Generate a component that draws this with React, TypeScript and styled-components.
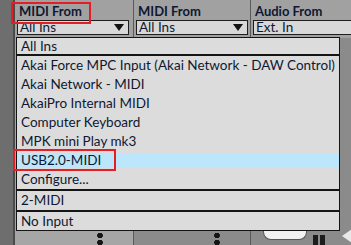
import React from 'react'
import styled, { createGlobalStyle } from 'styled-components'

const GlobalStyle = createGlobalStyle`
  html, body { margin: 0; padding: 0; background: #9b9b9b; }
  body { font-family: Lato, "Liberation Sans", sans-serif; }
`

type Item = { label: string; selected?: boolean; marked?: boolean }

const inputs: Item[][] = [
  [{ label: 'All Ins' }],
  [
    { label: 'Akai Force MPC Input (Akai Network - DAW Control)' },
    { label: 'Akai Network - MIDI' },
    { label: 'AkaiPro Internal MIDI' },
    { label: 'Computer Keyboard' },
    { label: 'MPK mini Play mk3' },
    { label: 'USB2.0-MIDI', selected: true, marked: true },
    { label: 'Configure...' },
  ],
  [{ label: '2-MIDI' }],
  [{ label: 'No Input' }],
]

export default function App() {
  return (
    <>
      <GlobalStyle />
      <Frame>
        <LeftStrip />
        <Track width={118}>
          <Header>
            <HeaderLabel marked>MIDI From</HeaderLabel>
          </Header>
          <Chooser>
            <span>All Ins</span>
            <Arrow />
          </Chooser>
          <TrackBody tone="#a6a6a6">
            <Dots />
          </TrackBody>
        </Track>
        <Track width={116}>
          <Header>
            <HeaderLabel>MIDI From</HeaderLabel>
          </Header>
          <Chooser>
            <span>All Ins</span>
            <Arrow />
          </Chooser>
          <TrackBody tone="#8b8b8b">
            <Dots />
          </TrackBody>
        </Track>
        <Track width={104}>
          <Header>
            <HeaderLabel>Audio From</HeaderLabel>
          </Header>
          <Chooser wide>
            <span>Ext. In</span>
          </Chooser>
          <TrackBody tone="#8b8b8b">
            <Pill />
            <Meter />
            <Triangle />
          </TrackBody>
        </Track>

        <Menu>
          {inputs.map((group, gi) => (
            <MenuGroup key={gi}>
              {group.map((item) => (
                <MenuItem key={item.label}>
                  <ItemLabel selected={item.selected} marked={item.marked}>
                    {item.label}
                  </ItemLabel>
                </MenuItem>
              ))}
            </MenuGroup>
          ))}
        </Menu>
      </Frame>
    </>
  )
}

const Frame = styled.div`
  position: relative;
  width: 351px;
  height: 245px;
  overflow: hidden;
  display: flex;
  background: #9b9b9b;
  color: #0f1832;
`

const LeftStrip = styled.div`
  width: 13px;
  flex: none;
  background: #6e6e6e;
  border-right: 2px solid #4a4a4a;
`

const Track = styled.div<{ width: number }>`
  width: ${(p) => p.width}px;
  flex: none;
  display: flex;
  flex-direction: column;
  border-right: 1px solid #5a5a5a;
  background: #a1a1a1;
`

const Header = styled.div`
  height: 20px;
  display: flex;
  align-items: center;
  padding-left: 4px;
`

const HeaderLabel = styled.div<{ marked?: boolean }>`
  position: relative;
  z-index: 2;
  font-size: 13px;
  font-weight: 700;
  line-height: 16px;
  padding-top: 2px;

  &::after {
    content: '';
    display: ${(p) => (p.marked ? 'block' : 'none')};
    position: absolute;
    left: -8px;
    right: -9px;
    top: 1px;
    bottom: -5px;
    border: 2px solid #e41e26;
  }
`

const Chooser = styled.div<{ wide?: boolean }>`
  height: 15px;
  width: ${(p) => (p.wide ? 'auto' : '112px')};
  margin: 0 ${(p) => (p.wide ? '-4px' : '0')} 0 2px;
  box-sizing: border-box;
  border: 1px solid #1e1e1e;
  background: #d8d8d8;
  display: flex;
  align-items: center;
  justify-content: space-between;
  padding: 0 4px 0 2px;
  font-size: 13.5px;
  line-height: 13px;
  position: relative;
  z-index: 1;
`

const Arrow = styled.div`
  width: 0;
  height: 0;
  border-left: 5px solid transparent;
  border-right: 5px solid transparent;
  border-top: 7px solid #111;
`

const TrackBody = styled.div<{ tone: string }>`
  flex: 1;
  position: relative;
  background: ${(p) => p.tone};
  display: flex;
  align-items: flex-end;
  justify-content: flex-end;
  gap: 6px;
  padding: 0 30px 0 0;
  margin-top: 3px;
`

const Dots = styled.div`
  width: 6px;
  height: 14px;
  margin-bottom: -1px;
  background: radial-gradient(circle, #151515 2.6px, transparent 3px) 0 0 / 6px 7px repeat-y;
`

const Pill = styled.div`
  width: 42px;
  height: 8px;
  margin-bottom: 5px;
  border: 1px solid #555;
  border-top: none;
  border-radius: 0 0 8px 8px;
  background: #f2f2f2;
`

const Meter = styled.div`
  width: 12px;
  height: 10px;
  background: linear-gradient(90deg, #1c1c1c 0 5px, transparent 5px 7px, #1c1c1c 7px 12px);
`

const Triangle = styled.div`
  position: absolute;
  right: 0;
  bottom: 0;
  width: 0;
  height: 0;
  border-top: 9px solid transparent;
  border-bottom: 9px solid transparent;
  border-right: 13px solid #e8e8e8;
`

const Menu = styled.div`
  position: absolute;
  left: 16px;
  top: 37px;
  width: 324px;
  box-sizing: border-box;
  border: 1px solid #141414;
  background: #dcdcdc;
  font-size: 13.5px;
  z-index: 3;
`

const MenuGroup = styled.div`
  & + & {
    border-top: 2px solid #151515;
  }
  &:first-child > div {
    height: 16px;
  }
  &:last-child > div {
    height: 18px;
  }
`

const MenuItem = styled.div`
  height: 19px;
  display: flex;
  align-items: center;
`

const ItemLabel = styled.div<{ selected?: boolean; marked?: boolean }>`
  position: relative;
  flex: 1;
  height: 15px;
  line-height: 15px;
  padding-left: 4px;
  white-space: nowrap;
  background: ${(p) => (p.selected ? '#bce6fb' : 'transparent')};

  &::after {
    content: '';
    display: ${(p) => (p.marked ? 'block' : 'none')};
    position: absolute;
    left: -4px;
    width: 103px;
    top: -4px;
    bottom: -3px;
    box-sizing: border-box;
    border: 2.5px solid #e41e26;
  }
`
